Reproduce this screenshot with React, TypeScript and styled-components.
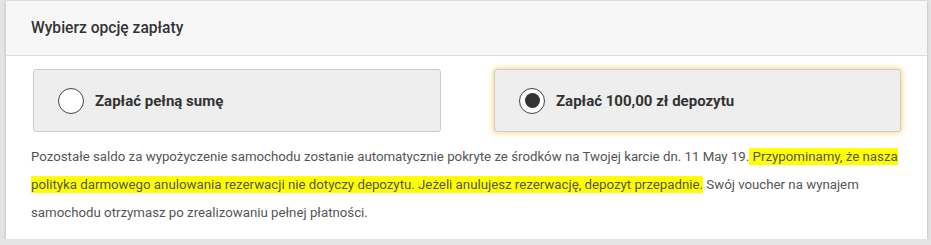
import React from "react";
import styled, { createGlobalStyle } from "styled-components";

const Global = createGlobalStyle`
  html, body { margin: 0; padding: 0; background: #e4e4e4; }
  body { padding: 1px 4px 0 6px; font-family: Roboto, "Liberation Sans", sans-serif; }
`;

const Card = styled.section`
  width: 921px;
  background: #fff;
  box-shadow: 0 1px 3px rgba(0, 0, 0, 0.22);
  padding-bottom: 12px;
`;

const Header = styled.header`
  height: 55px;
  box-sizing: border-box;
  background: #f7f7f7;
  border-bottom: 1px solid #dedede;
  display: flex;
  align-items: center;
  padding: 0 25px;
`;

const Title = styled.h2`
  margin: 0;
  font-size: 15.6px;
  font-weight: 500;
  color: #333;
`;

const Options = styled.div`
  display: grid;
  grid-template-columns: 408px 407px;
  column-gap: 53px;
  padding: 13px 0 0 27px;
`;

const Option = styled.label<{ $selected?: boolean }>`
  display: flex;
  align-items: center;
  gap: 11px;
  height: 63px;
  box-sizing: border-box;
  padding: 0 0 0 24px;
  background: #eeeeee;
  border: 1px solid #cccccc;
  border-radius: 3px;
  box-shadow: ${(p) => (p.$selected ? "0 0 5px 1px rgba(255, 200, 80, 0.75)" : "none")};
  cursor: pointer;
`;

const Radio = styled.span<{ $checked?: boolean }>`
  width: 26px;
  height: 26px;
  box-sizing: border-box;
  border: 1px solid #444;
  border-radius: 50%;
  background: #fff;
  display: flex;
  align-items: center;
  justify-content: center;
  &::after {
    content: "";
    width: 15px;
    height: 15px;
    border-radius: 50%;
    background: #333;
    display: ${(p) => (p.$checked ? "block" : "none")};
  }
`;

const OptionText = styled.span`
  font-size: 15px;
  font-weight: 700;
  color: #333;
`;

const Note = styled.p`
  margin: 11px 0 0 0;
  padding: 0 25px;
  font-size: 13.25px;
  line-height: 28px;
  color: #555;
`;

const Mark = styled.span`
  background: #ffff00;
  padding: 1px 0;
`;

export default function App() {
  return (
    <>
      <Global />
      <Card>
        <Header>
          <Title>Wybierz opcję zapłaty</Title>
        </Header>
        <Options>
          <Option>
            <Radio />
            <OptionText>Zapłać pełną sumę</OptionText>
          </Option>
          <Option $selected>
            <Radio $checked />
            <OptionText>Zapłać 100,00 zł depozytu</OptionText>
          </Option>
        </Options>
        <Note>
          Pozostałe saldo za wypożyczenie samochodu zostanie automatycznie pokryte ze środków na Twojej karcie dn. 11 May 19.
          <Mark> Przypominamy, że nasza polityka darmowego anulowania rezerwacji nie dotyczy depozytu. Jeżeli anulujesz rezerwację, depozyt przepadnie.</Mark>
          {" "}Swój voucher na wynajem samochodu otrzymasz po zrealizowaniu pełnej płatności.
        </Note>
      </Card>
    </>
  );
}
